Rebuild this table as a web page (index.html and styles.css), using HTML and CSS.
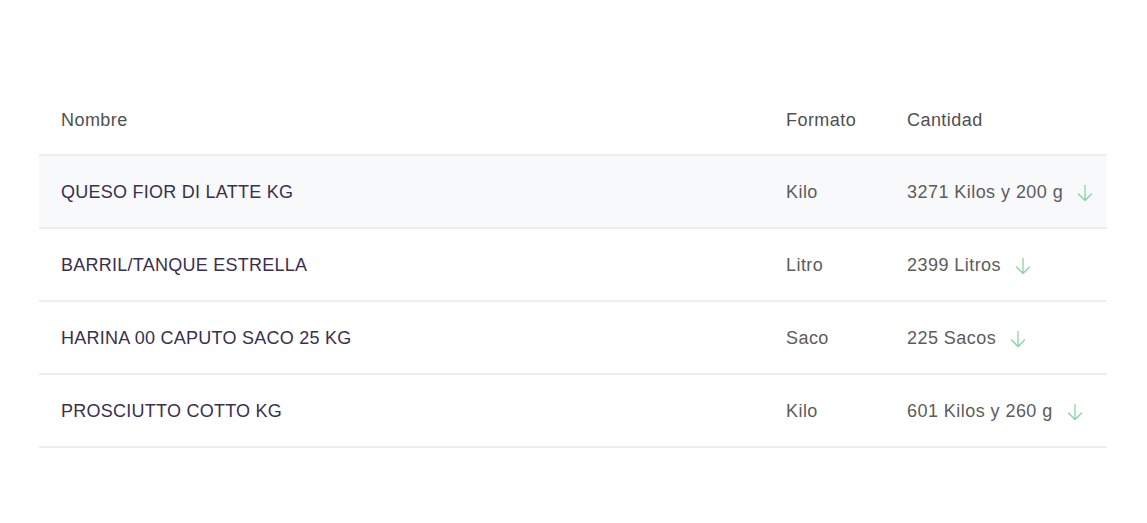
FILE: index.html
```html
<!DOCTYPE html>
<html lang="es">
<head>
<meta charset="utf-8">
<title>Inventario</title>
<link rel="stylesheet" href="styles.css">
</head>
<body>
<div class="table">
  <div class="row head">
    <div class="cell">Nombre</div>
    <div class="cell">Formato</div>
    <div class="cell">Cantidad</div>
  </div>
  <div class="row shaded">
    <div class="cell name">QUESO FIOR DI LATTE KG</div>
    <div class="cell fmt">Kilo</div>
    <div class="cell qty">3271 Kilos y 200 g <svg class="arrow" viewBox="0 0 16 18" width="16" height="18"><path d="M8 1.5V16.5M1.5 10L8 16.5L14.5 10"/></svg></div>
  </div>
  <div class="row">
    <div class="cell name">BARRIL/TANQUE ESTRELLA</div>
    <div class="cell fmt">Litro</div>
    <div class="cell qty">2399 Litros <svg class="arrow" viewBox="0 0 16 18" width="16" height="18"><path d="M8 1.5V16.5M1.5 10L8 16.5L14.5 10"/></svg></div>
  </div>
  <div class="row">
    <div class="cell name">HARINA 00 CAPUTO SACO 25 KG</div>
    <div class="cell fmt">Saco</div>
    <div class="cell qty">225 Sacos <svg class="arrow" viewBox="0 0 16 18" width="16" height="18"><path d="M8 1.5V16.5M1.5 10L8 16.5L14.5 10"/></svg></div>
  </div>
  <div class="row">
    <div class="cell name">PROSCIUTTO COTTO KG</div>
    <div class="cell fmt">Kilo</div>
    <div class="cell qty">601 Kilos y 260 g <svg class="arrow" viewBox="0 0 16 18" width="16" height="18"><path d="M8 1.5V16.5M1.5 10L8 16.5L14.5 10"/></svg></div>
  </div>
</div>
</body>
</html>
```
FILE: styles.css
```css
html, body {
  margin: 0;
  padding: 0;
  background: #ffffff;
}
body {
  font-family: "Liberation Sans", Arial, Helvetica, sans-serif;
  font-size: 18px;
  letter-spacing: 0.45px;
}
.table {
  margin: 84px 40px 0 39px;
}
.row {
  display: grid;
  grid-template-columns: 725px 121px 1fr;
  align-items: center;
  height: 73px;
  box-sizing: border-box;
  border-bottom: 2px solid #eeeeef;
}
.row.head {
  height: 72px;
  color: #505050;
}
.row.shaded {
  background: #f8f9fa;
}
.cell {
  padding-left: 22px;
  padding-top: 2px;
  white-space: nowrap;
}
.name {
  color: #3a2f50;
  letter-spacing: 0.25px;
}
.fmt, .qty {
  color: #5c5c5c;
}
.qty {
  display: flex;
  align-items: center;
  gap: 14px;
}
.arrow {
  fill: none;
  stroke: #86d6a1;
  stroke-width: 1.3;
  stroke-linecap: round;
  stroke-linejoin: round;
}
```
